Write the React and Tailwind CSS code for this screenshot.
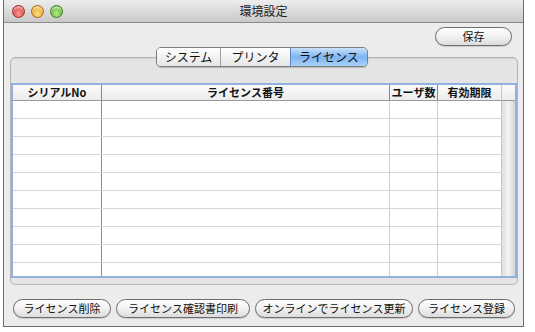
import React from "react";

const Light = ({ from, to, ring }) => (
  <span
    className={`w-[13px] h-[13px] rounded-full border ${ring} ${from} ${to} bg-radial-[at_50%_70%] shadow-[inset_0_2px_2px_rgba(255,255,255,0.6)]`}
  />
);

const PillButton = ({ label, width }) => (
  <button
    className={`${width} h-[19px] rounded-full border border-[#6e6e6e] bg-gradient-to-b from-[#ffffff] via-[#f1f1f1] to-[#dcdcdc] text-[11px] leading-none text-[#111] shadow-[0_1px_1px_rgba(0,0,0,0.15)] flex items-center justify-center`}
  >
    {label}
  </button>
);

const App = () => {
  const rows = Array.from({ length: 10 });

  return (
    <div
      className="w-[535px] h-[332px] bg-white pl-[3px] overflow-hidden"
      style={{ fontFamily: '"Noto Sans CJK JP", "Noto Sans", sans-serif' }}
    >
      <div className="w-[521px] h-[327px] border-x border-b border-[#6d6d6d] bg-[#ececec] flex flex-col">
        {/* Title bar */}
        <div className="h-[23px] shrink-0 bg-gradient-to-b from-[#ededed] to-[#c9c9c9] border-b border-[#8a8a8a] flex items-center px-[8px] relative">
          <div className="flex gap-[6px]">
            <Light from="from-[#ff9d94]" to="to-[#c8211a]" ring="border-[#9c2a22]" />
            <Light from="from-[#ffe08a]" to="to-[#e08a00]" ring="border-[#a66b10]" />
            <Light from="from-[#b8f08a]" to="to-[#3f9b1a]" ring="border-[#3f7a22]" />
          </div>
          <div className="absolute inset-x-0 top-0 h-full flex items-center justify-center text-[12px] text-[#222] pointer-events-none">
            環境設定
          </div>
        </div>

        {/* Save button row */}
        <div className="h-[23px] shrink-0 flex items-end justify-end pr-[11px]">
          <PillButton label="保存" width="w-[77px]" />
        </div>

        {/* Tab panel */}
        <div className="relative mt-[11px] ml-[6px] mr-[5px] h-[228px] rounded-[5px] border border-[#b4b4b4] bg-[#e4e4e4] shadow-[inset_0_1px_1px_rgba(0,0,0,0.08)]">
          <div className="absolute -top-[11px] left-0 right-0 flex justify-center">
            <div className="-ml-[4px] flex h-[20px] rounded-[5px] border border-[#7d7d7d] overflow-hidden text-[12px] leading-none shadow-[0_1px_1px_rgba(0,0,0,0.2)]">
              <div className="w-[64px] flex items-center justify-center bg-gradient-to-b from-white to-[#e6e6e6] border-r border-[#a0a0a0] text-[#111]">
                システム
              </div>
              <div className="w-[69px] flex items-center justify-center bg-gradient-to-b from-white to-[#e6e6e6] text-[#111]">
                プリンタ
              </div>
              <div className="w-[77px] flex items-center justify-center bg-gradient-to-b from-[#c9e1fb] via-[#7fb4f0] to-[#a8d2fb] border-l border-[#5b84c0] text-[#111]">
                ライセンス
              </div>
            </div>
          </div>

          {/* Table */}
          <div className="mt-[25px] mx-[0px] h-[195px] border-2 border-[#8fb3dc] bg-white flex">
            <div className="flex-1 flex flex-col overflow-hidden">
              <div className="h-[16px] shrink-0 flex text-[11px] font-bold leading-none text-[#111] bg-gradient-to-b from-[#fbfbfb] to-[#ececec] border-b border-[#9a9a9a]">
                <div className="w-[89px] flex items-center justify-center border-r border-[#888]">シリアルNo</div>
                <div className="w-[288px] flex items-center justify-center border-r border-[#888]">ライセンス番号</div>
                <div className="w-[48px] flex items-center justify-center border-r border-[#888]">ユーザ数</div>
                <div className="flex-1 flex items-center justify-center">有効期限</div>
              </div>
              {rows.map((_, i) => (
                <div key={i} className="h-[18px] shrink-0 flex border-b border-[#d6d6d6]">
                  <div className="w-[89px] border-r border-[#8a8a8a]" />
                  <div className="w-[288px] border-r border-[#cfcfcf]" />
                  <div className="w-[48px] border-r border-[#cfcfcf]" />
                  <div className="flex-1" />
                </div>
              ))}
            </div>
            {/* Scrollbar */}
            <div className="w-[14px] flex flex-col border-l border-[#c6c6c6]">
              <div className="h-[16px] shrink-0 bg-gradient-to-b from-[#fbfbfb] to-[#ececec] border-b border-[#9a9a9a]" />
              <div className="flex-1 bg-gradient-to-r from-[#e0e0e0] via-[#f4f4f4] to-[#d4d4d4]" />
            </div>
          </div>
        </div>

        {/* Bottom buttons */}
        <div className="mt-[14px] flex items-center pl-[9px] gap-[5px]">
          <PillButton label="ライセンス削除" width="w-[98px]" />
          <PillButton label="ライセンス確認書印刷" width="w-[134px]" />
          <PillButton label="オンラインでライセンス更新" width="w-[158px]" />
          <PillButton label="ライセンス登録" width="w-[97px]" />
        </div>
      </div>
    </div>
  );
};

export default App;
